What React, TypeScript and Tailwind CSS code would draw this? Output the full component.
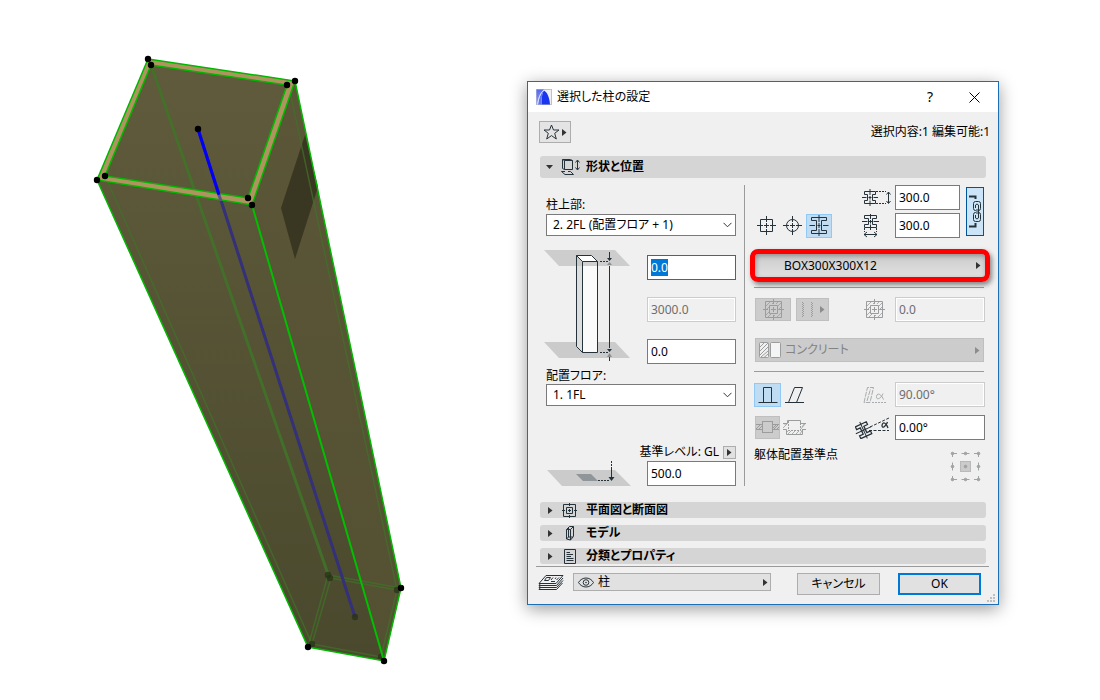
import { useEffect, useRef, useState } from 'react';
import type { ReactNode } from 'react';

const INK = '#26323a';
const DIM = '#9a9c9d';

// ---------- small shared pieces ----------

function Triangle({ dim = false }: { dim?: boolean }) {
  return (
    <svg className="h-[7px] w-[5px] shrink-0" viewBox="0 0 5 7" fill={dim ? '#8c8c8c' : '#333'}>
      <path d="M0 0L4.5 3.5L0 7Z" />
    </svg>
  );
}

function SelectBox({ id, options }: { id: string; options: string[] }) {
  return (
    <div className="relative">
      <select
        id={id}
        className="block h-[22px] w-full appearance-none border border-[#7a7a7a] bg-white pl-[6px] pr-6 leading-4 outline-none"
      >
        {options.map((o) => (
          <option key={o}>{o}</option>
        ))}
      </select>
      <svg className="pointer-events-none absolute right-1 top-2 h-[6px] w-[9px]" viewBox="0 0 9 6" fill="none" stroke="#333">
        <path d="M0.5 0.8L4.5 4.8L8.5 0.8" />
      </svg>
    </div>
  );
}

function NumberBox({ label, value, disabled = false, wide = false }: { label: string; value: string; disabled?: boolean; wide?: boolean }) {
  const [text, setText] = useState(value);
  return (
    <input
      type="text"
      aria-label={label}
      value={text}
      disabled={disabled}
      onChange={(e) => setText(e.target.value)}
      className={`block h-[25px] border px-[3px] leading-4 outline-none ${wide ? 'w-[90px]' : 'w-[89px]'} ${
        disabled ? 'border-[#cccccc] bg-[#f0f0f0] text-[#6d6d6d] shadow-[inset_0_0_0_1px_#fff]' : 'border-[#7a7a7a] bg-white'
      }`}
    />
  );
}

function SectionBar({ title, icon, open = false }: { title: string; icon: ReactNode; open?: boolean }) {
  return (
    <button
      type="button"
      aria-expanded={open}
      className={`mx-3 flex items-center rounded-[3px] bg-[#d5d5d5] pl-[6px] font-bold leading-4 ${open ? 'h-[22px]' : 'h-4'}`}
    >
      <span className="flex w-[14px] justify-start">
        {open ? (
          <svg className="h-1 w-[7px]" viewBox="0 0 7 4" fill="#333"><path d="M0 0H7L3.5 4Z" /></svg>
        ) : (
          <span className="pl-[2px]"><Triangle /></span>
        )}
      </span>
      <span className="flex w-[26px]">{icon}</span>
      {title}
    </button>
  );
}

// ---------- icons ----------

function AppLogo() {
  return (
    <svg className="h-4 w-4" viewBox="0 0 16 16">
      <defs>
        <linearGradient id="logo" x1="0" y1="0" x2="0" y2="1">
          <stop offset="0" stopColor="#5468f0" />
          <stop offset="1" stopColor="#8f9dfa" />
        </linearGradient>
      </defs>
      <rect x="0.500" y="0.500" width="15" height="15" fill="#f0f0f2" stroke="#c0c0c6" />
      <path d="M0.500 0.500H8C4 4 2.500 9 1.500 15.500H0.500Z" fill="url(#logo)" />
      <path d="M5.500 15.500C5.500 9 6 4 8 1.500C11.500 3.500 13.500 9 14 15.500Z" fill="#1a35f0" />
      <path d="M2 15.500C3 8.500 5 3.500 8 1.500C6 5 5.500 9 5.500 15.500Z" fill="#5f74f5" />
      <path d="M1.500 15.500C2.500 8.500 4.500 3.500 8 1.200" fill="none" stroke="#dfe3ff" strokeWidth="0.900" />
    </svg>
  );
}

function ShapeIcon() {
  return (
    <svg className="h-[18px] w-5" viewBox="0 0 20 18" fill="none" stroke={INK}>
      <path d="M4.500 2.500H12.500V11.500H4.500ZM4.500 2.500L2.500 1.500V10.500L4.500 11.500M2.500 1.500H10.500L12.500 2.500" />
      <path d="M5 13.500H1.500L5 16.500H13.500L10.500 13.500H8" />
      <path d="M17.500 2.500V11.500M15.500 4.500L17.500 2L19.500 4.500M15.500 9.500L17.500 12L19.500 9.500" />
    </svg>
  );
}

function PlanIcon() {
  return (
    <svg className="ml-[2px] h-[15px] w-[15px]" viewBox="0 0 15 15" fill="none" stroke={INK}>
      <path d="M1.500 1.500H13.500V13.500H1.500ZM4.500 4.500H10.500V10.500H4.500ZM7.500 6V9M6 7.500H9M7.500 0V3M7.500 12V15M0 7.500H3M12 7.500H15" />
    </svg>
  );
}

function ModelIcon() {
  return (
    <svg className="ml-[5px] h-4 w-[10px]" viewBox="0 0 10 16" fill="none" stroke={INK}>
      <path d="M1.500 4.500H5.500V15L1.500 14ZM1.500 4.500L4.500 1.500H8.500L5.500 4.500M8.500 1.500V11.500L5.500 15M3.500 3V12L1.500 14M3.500 12H8" />
    </svg>
  );
}

function DocIcon() {
  return (
    <svg className="ml-1 h-[15px] w-3" viewBox="0 0 12 15" fill="none" stroke={INK}>
      <path d="M0.500 0.500H11.500V14.500H0.500ZM2.500 3.500H6M2.500 5.500H9M2.500 7.500H7M2.500 9.500H9.500M2.500 11.500H9.500" />
    </svg>
  );
}

// Cross-section of an I profile, its axes are added by the icon
const I_PROFILE = 'M2.500 2.500H17.500V5.500H12.500V15.500H17.500V18.500H2.500V15.500H7.500V5.500H2.500Z';

function RectSectionIcon() {
  return (
    <svg className="h-[19px] w-[19px]" viewBox="0 0 19 19" fill="none" stroke={INK}>
      <path d="M3.500 3.500H15.500V15.500H3.500ZM9.500 0V6M9.500 7V12M9.500 13V19M0 9.500H6M7 9.500H12M13 9.500H19" />
    </svg>
  );
}

function RoundSectionIcon() {
  return (
    <svg className="h-[19px] w-[19px]" viewBox="0 0 19 19" fill="none" stroke={INK}>
      <circle cx="9.500" cy="9.500" r="6" />
      <path d="M9.500 0V6M9.500 7V12M9.500 13V19M0 9.500H6M7 9.500H12M13 9.500H19" />
    </svg>
  );
}

function ProfileSectionIcon() {
  return (
    <svg className="h-[21px] w-5" viewBox="0 0 20 21" fill="none" stroke={INK}>
      <path d={I_PROFILE} />
      <path d="M10 0V7M10 8V13M10 14V21M0.500 10.500H6M8.500 10.500H11.500M14 10.500H19.500" />
    </svg>
  );
}

function HeightIcon() {
  return (
    <svg className="h-[18px] w-[29px]" viewBox="0 0 29 18" fill="none" stroke={INK}>
      <path d="M2.500 2.500H13.500V5.500H10.500V11.500H13.500V14.500H2.500V11.500H5.500V5.500H2.500Z" />
      <path d="M8 0V6M8 7V10.500M8 11.500V17M0 8.500H4.500M6.500 8.500H9.500M11.500 8.500H16" />
      <path d="M14 2.500H24M14 14.500H24" strokeDasharray="2 1" />
      <path d="M26.500 3V14M24.500 5.500L26.500 3L28.500 5.500M24.500 12L26.500 14.500L28.500 12" />
    </svg>
  );
}

function WidthIcon() {
  return (
    <svg className="h-6 w-[17px]" viewBox="0 0 17 24" fill="none" stroke={INK}>
      <path d="M2.500 1.500H14.500V4.500H10.500V10.500H14.500V13.500H2.500V10.500H6.500V4.500H2.500Z" />
      <path d="M8.500 0V5M8.500 6V9.500M8.500 10.500V16M0 7.500H5.500M7 7.500H10M11.500 7.500H17" />
      <path d="M2.500 14V18M14.500 14V18" strokeDasharray="2 1" />
      <path d="M2 20.500H15M5 18L2 20.500L5 23M12 18L15 20.500L12 23" />
    </svg>
  );
}

function ChainIcon() {
  return (
    <svg className="h-[33px] w-[13px]" viewBox="0 0 13 33" fill="none" stroke={INK}>
      <path d="M0 1.500H6.500V4M0 31.500H6.500V28" strokeWidth="2" />
      <path d="M7 15.500H6.500Q4.500 15.500 4.500 13.500V8.500Q4.500 6.500 6.500 6.500H9.500Q11.500 6.500 11.500 8.500V13.500Q11.500 15.500 9.500 15.500" />
      <path d="M7 17.500H6.500Q4.500 17.500 4.500 19.500V24.500Q4.500 26.500 6.500 26.500H9.500Q11.500 26.500 11.500 24.500V19.500Q11.500 17.500 9.500 17.500" />
      <path d="M6.500 13V10Q8 8 9.500 10V23Q8 25 6.500 23V20M8 14V19" />
    </svg>
  );
}

function VeneerIcon() {
  return (
    <svg className="h-[21px] w-[21px] shrink-0" viewBox="0 0 21 21" fill="none" stroke={DIM}>
      <path d="M3 7L7 3M3 11L6 8M9 5L11 3M13 5L15 3M3 16L6 13M5 18L8 15M10 18L12 16M14 18L18 14M15 11L18 8M15 7L18 4" strokeWidth="0.800" />
      <path d="M2.500 2.500H18.500V18.500H2.500ZM6.500 6.500H14.500V14.500H6.500ZM10.500 8V13M8 10.500H13M10.500 0V5M10.500 16V21M0 10.500H5M16 10.500H21" />
    </svg>
  );
}

function HatchIcon() {
  return (
    <svg className="h-4 w-[22px]" viewBox="0 0 22 16" fill="none" stroke={DIM}>
      <rect x="0.500" y="0.500" width="9" height="15" rx="1" fill="#f0f0f0" />
      <path d="M1 5L5 1M1 9L9 1M1 13L9 5M2 15L9 9M5 15.500L9 12" />
      <rect x="11.500" y="0.500" width="10" height="15" rx="1" fill="#f4f4f4" />
    </svg>
  );
}

function UprightIcon() {
  return (
    <svg className="h-[18px] w-5" viewBox="0 0 20 18" fill="none" stroke={INK}>
      <path d="M0.500 16.500H19.500M5.500 16.500V1.500H13.500V16.500" />
    </svg>
  );
}

function SlantedIcon() {
  return (
    <svg className="h-[18px] w-[19px]" viewBox="0 0 19 18" fill="none" stroke={INK}>
      <path d="M0 16.500H19M3.500 16.500L9.500 1.500H17.500L11.500 16.500" />
    </svg>
  );
}

function SlantAngleIcon() {
  return (
    <svg className="h-[18px] w-6" viewBox="0 0 24 18" fill="none" stroke="#a9abac">
      <path d="M1 16.500L4.500 1.500H10.500L7 16.500ZM4 15L7.500 3" strokeDasharray="5 1" />
      <path d="M9 16.500H23" strokeDasharray="2 1" />
      <path d="M20 7.500C18 13 13 14.500 13.500 10.500C14 6.500 18 7.500 20.500 13.500" />
    </svg>
  );
}

function RotationIcon() {
  return (
    <svg className="h-[23px] w-[35px]" viewBox="0 0 35 23" fill="none" stroke={INK}>
      <g transform="rotate(-25 9 14)">
        <path d="M2.500 7.500H14.500V10.500H10.500V17.500H14.500V20.500H2.500V17.500H6.500V10.500H2.500Z" strokeWidth="1.300" />
        <path d="M8.500 5V23M0 14H17" />
      </g>
      <path d="M15 11L34 2M14 14.500H34" strokeDasharray="3 1.500" />
      <path d="M32.500 6C31 10.500 27 13 27 9.500C27.500 5.500 31 6 33 12" strokeWidth="1.300" />
    </svg>
  );
}

function WrapIcon({ round = false }: { round?: boolean }) {
  return (
    <svg className="h-[17px] w-[23px]" viewBox="0 0 23 17" fill="none" stroke={DIM}>
      {round ? (
        <>
          <path d="M0 4.500H4.500V1.500H17.500V4.500H23" />
          <path d="M5.500 2V11.500H17.500V2" strokeDasharray="2 1" />
          <path d="M0 10.500H3.500V15.500H19.500V10.500H23" />
          <path d="M0 9L4 5M4 13L6 11M5 15L8 12M9 15L12 12M13 15L16 12M17 15L20 10M18 10L22 5M1 5H3M19 8L21 5" strokeWidth="0.800" />
        </>
      ) : (
        <>
          <path d="M0 5.500H6M0 10.500H6M17 5.500H23M17 10.500H23M0 10L4 6M3 10L6 7M17 9L20 6M18 10L22 6M21 10L23 8" />
          <rect x="6.500" y="2.500" width="10" height="11" />
        </>
      )}
    </svg>
  );
}

function AnchorGrid() {
  const at = [4.5, 17.5, 30.5];
  return (
    <svg className="h-[35px] w-[35px]" viewBox="0 0 35 35" stroke="#a0a2a3" fill="#a0a2a3">
      <rect x="12.500" y="12.500" width="10" height="10" fill="#cbcbcb" stroke="#b9b9b9" />
      {at.map((y) =>
        at.map((x) => <circle key={`${x}-${y}`} cx={x} cy={y} r="1.300" />)
      )}
      <path
        fill="none"
        d="M4.500 8V4.500H9M13.500 4.500H21.500M26 4.500H30.500V8M4.500 13.500V21.500M30.500 13.500V21.500M4.500 27V30.500H9M13.500 30.500H21.500M26 30.500H30.500V27"
      />
    </svg>
  );
}

function LayerIcon() {
  return (
    <svg className="h-[15px] w-[26px]" viewBox="0 0 26 15" fill="none" stroke={INK}>
      <path d="M8 0.500H25L18 8.500H1ZM2.500 8.500L1 10.500H18.500L25 3M2.500 10.500L1 12.500H18.500L25 5.500M2.500 12.500L1 14.500H18.500L24.500 8" />
      <path d="M8.500 2.500H12.500L10.500 5.500H6.500ZM15 2.500L13 5M18 2.500L17 4M21 2.500L18.500 5M13 6.500H17" />
    </svg>
  );
}

function EyeIcon() {
  return (
    <svg className="h-[11px] w-4" viewBox="0 0 16 11" fill="none" stroke={INK}>
      <path d="M0.500 5.500C4 -0.500 12 -0.500 15.500 5.500C12 11.500 4 11.500 0.500 5.500Z" />
      <circle cx="8" cy="5.500" r="2.800" />
      <circle cx="8" cy="5.500" r="0.800" fill={INK} stroke="none" />
    </svg>
  );
}

// Column between the two floor planes
function ColumnDiagram() {
  return (
    <svg className="-ml-[2px] h-[116px] w-[88px]" viewBox="0 0 88 116" fill="none" stroke={INK}>
      <path d="M0 94H71L86 110H15Z" fill="#cbcbcb" stroke="none" />
      <path d="M32.500 7.500L38.500 13.500V104.500L32.500 98.500Z" fill="#dedede" />
      <path d="M38.500 13.500H53.500V104.500H38.500Z" fill="#fafafa" />
      <path d="M0 2H71L86 18H15Z" fill="#c4c4c4" fillOpacity="0.800" stroke="none" />
      <path d="M32.500 7.500H47.500L53.500 13.500H38.500Z" fill="#fff" />
      <path d="M32.500 7.500V18M38.500 13.500V18M53.500 13.500V18" />
      <path d="M56 13.500H64M56 104.500H64" strokeDasharray="2 1" />
      <path d="M65.500 4V11M65.500 18V100M65.500 108V113" />
      <path d="M63 10H68L65.500 13ZM63 101H68L65.500 104Z" fill={INK} stroke="none" />
      <path d="M63 17H68L65.500 14ZM63 109H68L65.500 105Z" fill="#8c8c8c" stroke="none" />
    </svg>
  );
}

function LevelDiagram() {
  return (
    <svg className="h-[25px] w-[85px]" viewBox="0 0 85 25" fill="none" stroke={INK}>
      <path d="M1 9H69L85 25H16Z" fill="#cbcbcb" stroke="none" />
      <path d="M30 13H45L52 20H37Z" fill="#8f9598" stroke="none" />
      <path d="M52 19.500H64" strokeDasharray="2 1" />
      <path d="M65.500 0V5" strokeDasharray="2 1" />
      <path d="M65.500 6V17" />
      <path d="M62.500 16H68.500L65.500 20Z" fill={INK} stroke="none" />
    </svg>
  );
}

// ---------- 3D view ----------

const OUTLINE_DOTS = [
  [148, 59], [151, 65], [295, 81], [287, 85], [252, 205], [248, 198], [97, 180], [105, 176],
  [198, 129], [401, 588], [384, 661], [308, 647],
];
const HIDDEN_DOTS = [[328, 575], [330, 578], [397, 590], [381, 657], [312, 644], [355, 617]];

function Viewport() {
  return (
    <svg className="block h-auto w-full" viewBox="0 0 527 700" role="img" aria-label="柱">
      <defs>
        <linearGradient id="body" x1="0" y1="60" x2="0" y2="660" gradientUnits="userSpaceOnUse">
          <stop offset="0" stopColor="#605b3c" />
          <stop offset="1" stopColor="#4a492d" />
        </linearGradient>
        <linearGradient id="side" x1="0" y1="80" x2="0" y2="660" gradientUnits="userSpaceOnUse">
          <stop offset="0" stopColor="#5b5638" />
          <stop offset="1" stopColor="#545032" />
        </linearGradient>
      </defs>
      <path d="M148 59L295 81L401 588L384 661L308 647L97 180Z" fill="url(#body)" />
      <path d="M295 81L401 588L384 661L252 205Z" fill="url(#side)" />
      <path d="M305 135L318 187L295 259L281 208Z" fill="#393622" />

      {/* edges seen through the body */}
      <g fill="none" stroke="#3f7428">
        <path d="M151 65L329 577" strokeWidth="3" opacity="0.850" />
        <path d="M106 178L312 644M289 87L397 590" strokeWidth="1.500" opacity="0.700" />
        <path d="M328 575L401 588M330 578L397 590M328 575L308 647M331 578L312 644L381 657L397 590" strokeWidth="1.500" opacity="0.700" />
      </g>
      <path d="M198 129L355 617" stroke="#34307a" strokeWidth="3" />
      {HIDDEN_DOTS.map(([x, y]) => (
        <circle key={`${x}-${y}`} cx={x} cy={y} r="3.200" fill="#283217" opacity="0.750" />
      ))}

      {/* top rim */}
      <path
        d="M148 59L295 81L252 205L97 180ZM151 65L105 176L248 198L287 85Z"
        fill="#b09460"
        fillRule="evenodd"
        stroke="#00b800"
        strokeWidth="1.500"
      />
      <path d="M198 129L219 195" stroke="#0000f8" strokeWidth="3" />
      <path d="M219 195L221 201" stroke="#5b5580" strokeWidth="3" />
      <path d="M97 180L308 647L384 661L401 588L295 81" fill="none" stroke="#00b800" strokeWidth="1.500" />
      <path d="M252 205L384 661" fill="none" stroke="#00c000" strokeWidth="2" />
      {OUTLINE_DOTS.map(([x, y]) => (
        <circle key={`${x}-${y}`} cx={x} cy={y} r="3.200" fill="#000" />
      ))}
    </svg>
  );
}

// ---------- dialog parts ----------

function LeftColumn() {
  const topOffset = useRef<HTMLInputElement>(null);
  const [offset, setOffset] = useState('0.0');

  // the top offset is ready to be typed over when the dialog opens
  useEffect(() => {
    topOffset.current?.focus();
    topOffset.current?.select();
  }, []);

  return (
    <div className="flex w-[190px] flex-col pt-3">
      <label htmlFor="top-floor" className="mb-px h-4 leading-4">柱上部:</label>
      <SelectBox id="top-floor" options={['2. 2FL (配置フロア + 1)', '1. 1FL']} />

      <div className="mt-3 flex justify-between">
        <ColumnDiagram />
        <div className="flex flex-col gap-[17px] pt-[7px]">
          <input
            ref={topOffset}
            type="text"
            aria-label="上部オフセット"
            value={offset}
            onChange={(e) => setOffset(e.target.value)}
            className="block h-[25px] w-[89px] border border-[#0078d7] bg-white px-[3px] leading-4 outline-none selection:bg-[#0078d7] selection:text-white"
          />
          <NumberBox label="高さ" value="3000.0" disabled />
          <NumberBox label="下部オフセット" value="0.0" />
        </div>
      </div>

      <label htmlFor="home-floor" className="mt-1 h-4 leading-4">配置フロア:</label>
      <SelectBox id="home-floor" options={['1. 1FL', '2. 2FL']} />

      <div className="mt-[37px] flex h-[18px] items-center justify-end gap-1 leading-4">
        <span>基準レベル: GL</span>
        <button type="button" aria-label="基準レベルを選択" className="flex h-[13px] w-[13px] items-center justify-center border border-[#adadad] bg-[#e1e1e1]">
          <Triangle />
        </button>
      </div>
      <div className="flex justify-between">
        <LevelDiagram />
        <NumberBox label="基準レベル" value="500.0" />
      </div>
    </div>
  );
}

function RightColumn() {
  return (
    <div className="flex min-w-0 flex-1 flex-col pl-[9px]">
      <div className="flex items-end">
        <div className="flex h-[25px] items-center">
          <button type="button" aria-label="長方形" className="ml-[3px]"><RectSectionIcon /></button>
          <button type="button" aria-label="円形" className="ml-[7px]"><RoundSectionIcon /></button>
          <button type="button" aria-label="断面形状" aria-pressed className="ml-1 flex h-6 w-[26px] items-center justify-center border border-[#90c8f6] bg-[#bfdcf3]">
            <ProfileSectionIcon />
          </button>
        </div>
        <div className="ml-auto flex flex-col gap-[3px]">
          <label className="flex items-center justify-end gap-1">
            <HeightIcon />
            <input type="text" aria-label="断面の高さ" defaultValue="300.0" className="h-[25px] w-[65px] border border-[#7a7a7a] bg-white px-[3px] leading-4 outline-none" />
          </label>
          <label className="flex items-center justify-between">
            <WidthIcon />
            <input type="text" aria-label="断面の幅" defaultValue="300.0" className="h-[25px] w-[65px] border border-[#7a7a7a] bg-white px-[3px] leading-4 outline-none" />
          </label>
        </div>
        <button type="button" aria-label="縦横比を固定" aria-pressed className="mb-[2px] ml-[6px] mr-px flex h-[49px] w-[18px] items-center justify-center border border-[#005499] bg-[#cce4f7]">
          <ChainIcon />
        </button>
      </div>

      <div className="relative ml-px mt-4">
        <button type="button" className="flex h-[23px] w-full items-center justify-between bg-linear-to-b from-[#cbcbcb] to-[#e1e1e1] pl-[29px] pr-1 leading-4">
          BOX300X300X12
          <Triangle />
        </button>
        <span className="pointer-events-none absolute -inset-[5px] rounded-lg border-[5px] border-[#ff0000] shadow-[2px_3px_5px_rgba(0,0,0,0.45),inset_1px_2px_5px_rgba(0,0,0,0.3)]" />
      </div>

      <hr className="mr-px mt-[10px] border-t border-[#9a9a9a]" />

      <div className="mt-[9px] flex items-center">
        <button type="button" disabled aria-label="化粧材" className="ml-px flex h-[23px] w-9 items-center justify-center border border-[#bfbfbf] bg-[#cccccc]">
          <VeneerIcon />
        </button>
        <button type="button" disabled aria-label="化粧材の種類" className="ml-[5px] flex h-[23px] w-[33px] items-center justify-between border border-[#bfbfbf] bg-[#cccccc] pl-1 pr-[3px]">
          <svg className="h-[15px] w-3" viewBox="0 0 12 15" fill="none" stroke={DIM} strokeDasharray="1 1">
            <path d="M1.500 0V15M2.500 1V15M10.500 0V15M11.500 1V15" />
          </svg>
          <Triangle dim />
        </button>
        <div className="ml-auto flex items-center gap-[10px]">
          <VeneerIcon />
          <NumberBox label="化粧材の厚さ" value="0.0" disabled wide />
        </div>
      </div>

      <button type="button" disabled className="ml-px mr-px mt-4 flex h-6 items-center border border-[#bfbfbf] bg-[#cccccc] pl-[3px] pr-[3px] leading-4 text-[#838383]">
        <HatchIcon />
        <span className="ml-1 flex-1 text-left">コンクリート</span>
        <Triangle dim />
      </button>

      <hr className="mr-px mt-[9px] border-t border-[#9a9a9a]" />

      <div className="mt-[10px] flex items-center">
        <button type="button" aria-label="垂直" aria-pressed className="flex h-6 w-[27px] items-center justify-center border border-[#90c8f6] bg-[#bfdcf3]">
          <UprightIcon />
        </button>
        <button type="button" aria-label="傾斜" className="ml-1"><SlantedIcon /></button>
        <div className="ml-auto flex items-center gap-2">
          <SlantAngleIcon />
          <NumberBox label="傾斜角度" value="90.00°" disabled wide />
        </div>
      </div>

      <div className="mt-2 flex items-center">
        <button type="button" disabled aria-label="壁に結合" className="ml-px flex h-[23px] w-[25px] items-center justify-center border border-[#bfbfbf] bg-[#cccccc]">
          <WrapIcon />
        </button>
        <button type="button" disabled aria-label="壁で包む" className="ml-[3px]"><WrapIcon round /></button>
        <div className="ml-auto flex items-center gap-[5px]">
          <RotationIcon />
          <NumberBox label="回転角度" value="0.00°" wide />
        </div>
      </div>

      <div className="mt-[7px] flex justify-between pr-[2px]">
        <span className="leading-4">躯体配置基準点</span>
        <span className="pt-[2px]"><AnchorGrid /></span>
      </div>
    </div>
  );
}

function ColumnSettingsDialog() {
  return (
    <section
      role="dialog"
      aria-labelledby="dialog-title"
      className="relative mr-[101px] mt-[81px] flex w-[472px] shrink-0 flex-col border border-[#1a6fb5] bg-[#f0f0f0] pb-[9px] shadow-[0_4px_16px_rgba(0,0,0,0.4)]"
    >
      <header className="flex h-[30px] items-center bg-white pl-2 pr-[18px]">
        <AppLogo />
        <h1 id="dialog-title" className="ml-[5px] flex-1 leading-4">選択した柱の設定</h1>
        <button type="button" aria-label="ヘルプ" className="mr-9 text-sm leading-4">?</button>
        <button type="button" aria-label="閉じる">
          <svg className="h-[11px] w-[11px]" viewBox="0 0 11 11" fill="none" stroke="#000">
            <path d="M0.500 0.500L10.500 10.500M10.500 0.500L0.500 10.500" />
          </svg>
        </button>
      </header>

      <div className="mb-[13px] mt-[9px] flex items-center justify-between pl-[11px] pr-2">
        <button type="button" aria-label="お気に入り" className="flex h-[22px] w-8 items-center justify-between border border-[#adadad] bg-[#e4e4e4] px-[3px]">
          <svg className="h-4 w-[17px]" viewBox="0 0 17 16" fill="none" stroke={INK}>
            <path d="M8.500 1L10.500 6H16L11.700 9.300L13.300 15L8.500 11.600L3.700 15L5.300 9.300L1 6H6.500Z" />
          </svg>
          <Triangle />
        </button>
        <span className="leading-4">選択内容:1 編集可能:1</span>
      </div>

      <SectionBar title="形状と位置" icon={<ShapeIcon />} open />
      <div className="flex pb-4 pl-[18px] pr-[13px] pt-[7px]">
        <LeftColumn />
        <div className="ml-2 w-px bg-[#9a9a9a]" />
        <RightColumn />
      </div>

      <div className="flex flex-col gap-[7px]">
        <SectionBar title="平面図と断面図" icon={<PlanIcon />} />
        <SectionBar title="モデル" icon={<ModelIcon />} />
        <SectionBar title="分類とプロパティ" icon={<DocIcon />} />
      </div>

      <footer className="ml-2 mr-[9px] mt-[2px] flex items-start border-t border-[#9a9a9a] pl-[2px] pr-2 pt-[6px]">
        <span className="pt-[2px]"><LayerIcon /></span>
        <button type="button" className="ml-[9px] flex h-[18px] w-[198px] items-center border border-[#adadad] bg-[#e1e1e1] pl-1 pr-[2px] leading-4">
          <EyeIcon />
          <span className="ml-1 flex-1 text-left">柱</span>
          <Triangle />
        </button>
        <button type="button" className="ml-auto h-[22px] w-[83px] border border-[#adadad] bg-[#e1e1e1] leading-4">キャンセル</button>
        <button type="button" className="ml-[18px] h-[22px] w-[83px] border-2 border-[#0078d7] bg-[#e1e1e1] leading-4">OK</button>
      </footer>

      <svg className="absolute bottom-[2px] right-[3px] h-2 w-2" viewBox="0 0 8 8" fill="#bfbfbf">
        <path d="M6 0h2v2h-2zM3 3h2v2h-2zM6 3h2v2h-2zM0 6h2v2h-2zM3 6h2v2h-2zM6 6h2v2h-2z" />
      </svg>
    </section>
  );
}

export default function App() {
  return (
    <main className="flex min-h-screen items-start bg-white font-['Noto_Sans','Noto_Sans_CJK_JP',sans-serif] text-xs text-black [font-feature-settings:'palt']" lang="ja">
      <div className="min-w-0 flex-1">
        <Viewport />
      </div>
      <ColumnSettingsDialog />
    </main>
  );
}
